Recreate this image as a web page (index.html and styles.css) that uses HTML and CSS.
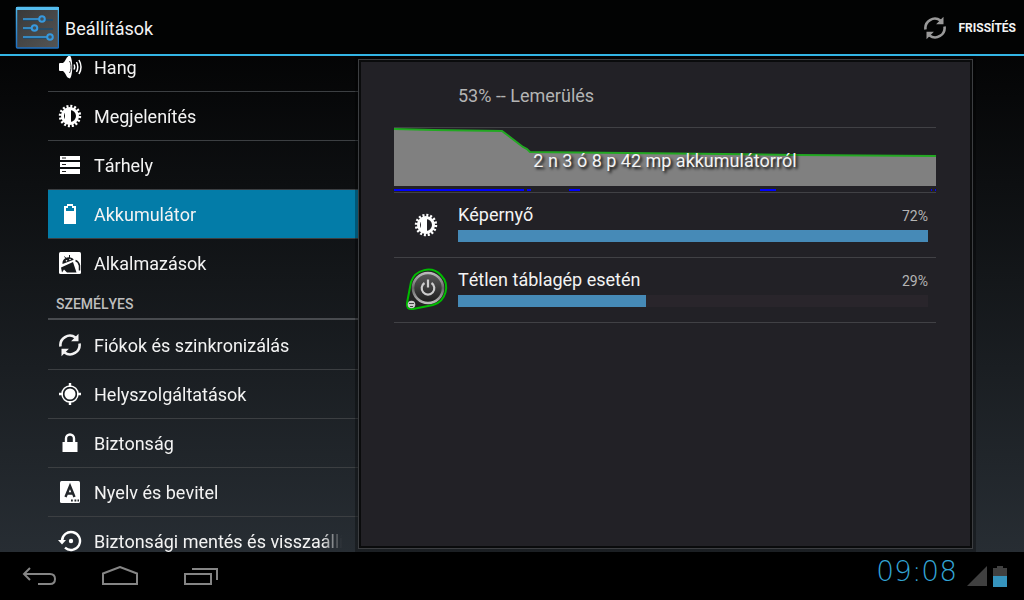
FILE: index.html
```html
<!DOCTYPE html>
<html lang="hu">
<head>
    <meta charset="UTF-8">
    <meta name="viewport" content="width=device-width, initial-scale=1.0">
    <title>Beállítások</title>
    <link rel="stylesheet" href="styles.css">
</head>
<body>
    <svg class="symbols" aria-hidden="true">
        <symbol id="brightness" viewBox="0 0 24 24">
            <circle cx="12" cy="12" r="9.700" fill="none" stroke="#fff" stroke-width="3" stroke-dasharray="2 1.809"/>
            <circle cx="12" cy="12" r="7.500" fill="none" stroke="#fff" stroke-width="3"/>
            <path d="M13 5.500H7v13h6z" fill="#fff"/>
        </symbol>
        <symbol id="sync" viewBox="0 0 24 24">
            <path d="M2.500 13.500A9.500 9.500 0 0 1 17.500 4.500M21.500 10.500A9.500 9.500 0 0 1 6.500 19.500" fill="none" stroke="currentColor" stroke-width="2.600"/>
            <path d="M20.500 .8v7.400h-7.400zM3.500 23.200v-7.400h7.400z" fill="currentColor"/>
        </symbol>
    </svg>
    <header class="header">
        <svg class="logo" viewBox="0 0 44 44">
            <defs>
                <linearGradient id="logoFill" x1="0" y1="0" x2="1" y2="1">
                    <stop offset="0" stop-color="#383838"/>
                    <stop offset="1" stop-color="#555"/>
                </linearGradient>
                <linearGradient id="logoEdge" x1="0" y1="0" x2="0" y2="1">
                    <stop offset="0" stop-color="#4ab4ea"/>
                    <stop offset="1" stop-color="#1d6fc0"/>
                </linearGradient>
            </defs>
            <rect x="1.500" y="1.500" width="42" height="40.500" rx="1" fill="url(#logoFill)" stroke="url(#logoEdge)" stroke-width="1.500"/>
            <path d="M1 1h43v3H1z" fill="#55bdee"/>
            <path d="M8 14h30M8 23h30M8 32h30" stroke="#1c4c70" stroke-width="1.500"/>
            <path d="M8 13h17M8 22h10M8 31h24" stroke="#379fe4" stroke-width="1.500"/>
            <g fill="#42515b" stroke="#3699df" stroke-width="2">
                <circle cx="27" cy="13" r="2.800"/>
                <circle cx="19.500" cy="22" r="2.800"/>
                <circle cx="35" cy="31" r="2.800"/>
            </g>
        </svg>
        <h1>Beállítások</h1>
        <button class="refresh" type="button">
            <svg class="icon" viewBox="0 0 24 24"><use href="#sync"/></svg>
            <span>Frissítés</span>
        </button>
    </header>
    <main class="content">
        <nav class="sidebar">
            <ul class="list">
                <li><a href="#">
                    <svg class="icon" viewBox="0 0 24 24">
                        <path d="M1 9q0-1 1-1h3V16H2q-1 0-1-1zM5 8C8 6 8 1 12 .5c3 3 3 20 0 23C8 23 8 18 5 16z" fill="#fff"/>
                        <path d="M11.500 6c2 3 2 9 0 12" fill="none" stroke="#333" stroke-width="1"/>
                        <path d="M16 9.500q1.300 2.500 0 5M18.500 7q2.500 5 0 10M21 5q4 7 0 14" fill="none" stroke="#fff" stroke-width="1.500"/>
                    </svg>
                    <span>Hang</span>
                </a></li>
                <li><a href="#">
                    <svg class="icon" viewBox="0 0 24 24"><use href="#brightness"/></svg>
                    <span>Megjelenítés</span>
                </a></li>
                <li><a href="#">
                    <svg class="icon" viewBox="0 0 24 24">
                        <path d="M2 3h20v4H2zM2 9h20v5H2zM2 16h20v5H2z" fill="#fff"/>
                        <path d="M4 5h4M4 11.500h4M4 18.500h4" stroke="#222" stroke-width="1.200"/>
                    </svg>
                    <span>Tárhely</span>
                </a></li>
                <li class="active"><a href="#">
                    <svg class="icon" viewBox="0 0 24 24">
                        <path d="M6 22V4h3V2h6v2h3v18z" fill="#fff"/>
                        <path d="M8 9V6h2V4h4v2h2v3z" fill="#037ca8"/>
                    </svg>
                    <span>Akkumulátor</span>
                </a></li>
                <li><a href="#">
                    <svg class="icon" viewBox="0 0 24 24">
                        <rect x="1" y="1" width="22" height="22" rx="1.500" fill="#fff"/>
                        <path d="M4.500 13C4 9 7 6.500 10.500 6.300c3 0 4.500 1.200 5.200 2.500z" fill="#16191c"/>
                        <path d="M6.500 5.500l1.500 2M11.500 4v3" stroke="#16191c" stroke-width="1"/>
                        <path d="M3 16.500L15 11l3.500 10.500H9L6 18.500l-2 3z" fill="#16191c"/>
                        <path d="M17.500 9.500q3 1 4 5v5" fill="none" stroke="#16191c" stroke-width="1.500"/>
                        <circle cx="8.500" cy="9.800" r=".8" fill="#fff"/>
                        <circle cx="12" cy="8.500" r=".8" fill="#fff"/>
                    </svg>
                    <span>Alkalmazások</span>
                </a></li>
            </ul>
            <h2>Személyes</h2>
            <ul class="list">
                <li><a href="#">
                    <svg class="icon" viewBox="0 0 24 24"><use href="#sync"/></svg>
                    <span>Fiókok és szinkronizálás</span>
                </a></li>
                <li><a href="#">
                    <svg class="icon" viewBox="0 0 24 24">
                        <path d="M12 1v4M12 19v4M1 12h4M19 12h4" stroke="#fff" stroke-width="2.400"/>
                        <circle cx="12" cy="12" r="8" fill="none" stroke="#fff" stroke-width="1.500"/>
                        <circle cx="12" cy="12" r="5.500" fill="#fff"/>
                    </svg>
                    <span>Helyszolgáltatások</span>
                </a></li>
                <li><a href="#">
                    <svg class="icon" viewBox="0 0 24 24">
                        <path d="M4.500 11h15v10h-15z" fill="#fff"/>
                        <path d="M8 11.500V7.500a4 4 0 0 1 8 0v4" fill="none" stroke="#fff" stroke-width="2.400"/>
                    </svg>
                    <span>Biztonság</span>
                </a></li>
                <li><a href="#">
                    <svg class="icon" viewBox="0 0 24 24">
                        <rect x="2" y="1" width="20" height="22" rx="1.500" fill="#fff"/>
                        <path d="M7.500 17l4.500-11 4.500 11M9 13.500h6" fill="none" stroke="#23272b" stroke-width="2.400"/>
                        <path d="M13 20.500h1.800M16.500 20.500h1.800M19.500 20.500h1.500" stroke="#23272b" stroke-width="2"/>
                    </svg>
                    <span>Nyelv és bevitel</span>
                </a></li>
                <li><a href="#">
                    <svg class="icon" viewBox="0 0 24 24">
                        <path d="M4 12a9 9 0 1 1 3 6.700" fill="none" stroke="#fff" stroke-width="2.400"/>
                        <path d="M0 11h8l-4 4.500z" fill="#fff"/>
                        <circle cx="13" cy="12" r="2.200" fill="#fff"/>
                    </svg>
                    <span>Biztonsági mentés és visszaállítás</span>
                </a></li>
            </ul>
        </nav>
        <section class="panel">
            <div class="details">
                <p class="status">53% -- Lemerülés</p>
                <div class="chart">
                    <svg viewBox="0 0 542 64" preserveAspectRatio="none">
                        <path d="M0 1L40 2L108 3L129 19L133 21L136 24L330 26L400 27L542 28V58H0z" fill="#808080"/>
                        <path d="M0 1L40 2L108 3L129 19L133 21L136 24L330 26L400 27L542 28" fill="none" stroke="#22a822" stroke-width="2"/>
                        <path d="M0 62h130M133 62h4M175 62h11M366 62h16M537 62h1M541 62h1" stroke="#00f" stroke-width="2"/>
                    </svg>
                    <span>2 n 3 ó 8 p 42 mp akkumulátorról</span>
                </div>
                <div class="usage">
                    <svg class="icon" viewBox="0 0 24 24"><use href="#brightness"/></svg>
                    <div class="info">
                        <div class="label"><span>Képernyő</span><small>72%</small></div>
                        <div class="bar"><div class="fill" style="width: 100%"></div></div>
                    </div>
                </div>
                <div class="usage">
                    <svg class="power" viewBox="0 0 48 48">
                        <defs>
                            <linearGradient id="rim" x1="0" y1="0" x2="0" y2="1">
                                <stop offset="0" stop-color="#bbb"/>
                                <stop offset=".5" stop-color="#666"/>
                                <stop offset="1" stop-color="#bbb"/>
                            </linearGradient>
                            <linearGradient id="knob" x1="0" y1="0" x2="0" y2="1">
                                <stop offset="0" stop-color="#5a5a5a"/>
                                <stop offset="1" stop-color="#1c1c1c"/>
                            </linearGradient>
                        </defs>
                        <path d="M9 16A18 18 0 1 1 31 39L11 43Q4 44 5 37z" fill="#222" stroke="#0b0" stroke-width="2"/>
                        <circle cx="26" cy="22" r="15" fill="url(#knob)" stroke="url(#rim)" stroke-width="2.600"/>
                        <path d="M22.500 17a6.300 6.300 0 1 0 7 0M26 13.500v8" fill="none" stroke="#ccc" stroke-width="2.200"/>
                        <circle cx="9.500" cy="38.500" r="3.800" fill="#ccc"/>
                        <path d="M7 37.500h5M8 40.500h3" stroke="#444" stroke-width="1.200"/>
                    </svg>
                    <div class="info">
                        <div class="label"><span>Tétlen táblagép esetén</span><small>29%</small></div>
                        <div class="bar"><div class="fill" style="width: 40%"></div></div>
                    </div>
                </div>
            </div>
        </section>
    </main>
    <footer class="navbar">
        <button type="button" aria-label="Vissza">
            <svg viewBox="0 0 40 24"><path d="M10 2L4 8l6 6M4 8h26q5 0 5 5t-5 5H18" fill="none" stroke="#858585" stroke-width="2"/></svg>
        </button>
        <button type="button" aria-label="Kezdőképernyő">
            <svg viewBox="0 0 40 24"><path d="M3 18V7.500L20 1l17 6.500V18z" fill="none" stroke="#858585" stroke-width="2"/></svg>
        </button>
        <button type="button" aria-label="Legutóbbi">
            <svg viewBox="0 0 40 24"><path d="M5 8h26v10H5zM12 3h25v11" fill="none" stroke="#858585" stroke-width="2"/></svg>
        </button>
        <div class="system">
            <time>09:08</time>
            <svg class="signal" viewBox="0 0 20 20"><path d="M0 20L20 0v20z" fill="#404040"/></svg>
            <svg class="battery" viewBox="0 0 14 21">
                <path d="M0 10V2h4V0h6v2h4v8z" fill="#404040"/>
                <path d="M0 10h14v11H0z" fill="#3593bd"/>
            </svg>
        </div>
    </footer>
</body>
</html>
```
FILE: styles.css
```css
* {
    margin: 0px;
    padding: 0px;
    box-sizing: border-box;
}
body {
    height: 100vh;
    display: flex;
    flex-direction: column;
    background: linear-gradient(#000, #272d33 552px);
    color: #f3f3f3;
    font-family: Roboto, "Liberation Sans", sans-serif;
    font-size: 18px;
    font-kerning: none;
    overflow: hidden;
}
a {
    color: inherit;
    text-decoration: none;
}
button {
    background: none;
    border: none;
    color: inherit;
    font-family: inherit;
    cursor: pointer;
}
.symbols {
    display: none;
}
.icon {
    width: 24px;
    height: 24px;
    flex-shrink: 0;
}
.header {
    flex-shrink: 0;
    height: 56px;
    display: flex;
    align-items: center;
    padding: 2px 8px 0px 15px;
    background-color: #020303;
    border-bottom: 2px solid #33b5e5;
}
.logo {
    width: 44px;
    height: 44px;
}
h1 {
    margin-left: 6px;
    font-size: 18px;
    font-weight: normal;
}
.refresh {
    display: flex;
    align-items: center;
    gap: 12px;
    margin-left: auto;
    font-size: 12px;
    font-weight: bold;
    text-transform: uppercase;
}
.refresh .icon {
    color: #999;
}
.content {
    flex: 1;
    min-height: 0px;
    display: flex;
    padding: 0px 48px;
}
.sidebar {
    width: 310px;
    flex-shrink: 0;
    overflow: hidden;
}
.list {
    list-style: none;
    margin-top: 1px;
}
/* the list is scrolled a little */
.list:first-child {
    margin-top: -13px;
}
.list li {
    height: 49px;
    border-bottom: 1px solid #3c3f42;
}
.list:first-child li:last-child {
    border-bottom-color: transparent;
}
.list a {
    height: 48px;
    display: flex;
    align-items: center;
    gap: 12px;
    padding: 0px 16px 0px 10px;
}
.list span {
    flex: 1;
    padding-top: 2px;
    overflow: hidden;
    white-space: nowrap;
    line-height: 24px;
    mask-image: linear-gradient(to left, transparent, #000 20px);
}
.list .active {
    background-color: #037ca8;
}
h2 {
    height: 32px;
    padding-left: 8px;
    border-bottom: 2px solid #484b4f;
    color: #bebebe;
    font-size: 14px;
    font-weight: 500;
    line-height: 32px;
    text-transform: uppercase;
}
.panel {
    flex: 1;
    position: relative;
    margin: 3px 3px 3px 0px;
    padding: 2px;
    border: 1px solid #3c3e41;
    background-color: #0a0b0c;
    box-shadow: 0px 0px 0px 3px rgba(0, 0, 0, 0.3);
}
.details {
    height: 100%;
    padding: 0px 34px 0px 33px;
    background-color: #222126;
}
.status {
    height: 66px;
    padding-left: 64px;
    border-bottom: 1px solid #414145;
    color: #b4b4b4;
    line-height: 68px;
}
.chart {
    height: 65px;
    display: grid;
    align-items: center;
    justify-items: center;
    border-bottom: 1px solid #414145;
}
.chart svg,
.chart span {
    grid-area: 1 / 1;
}
.chart svg {
    width: 100%;
    height: 64px;
}
.chart span {
    text-shadow: 2px 2px 3px #000;
}
.usage {
    height: 65px;
    display: flex;
    align-items: center;
    padding-right: 8px;
    border-bottom: 1px solid #414145;
}
.usage .icon {
    margin: 0px 20px;
}
.power {
    width: 48px;
    height: 48px;
    margin: 0px 8px;
}
.info {
    flex: 1;
    padding-bottom: 4px;
}
.label {
    display: flex;
    justify-content: space-between;
    align-items: center;
    margin-bottom: 4px;
    line-height: 22px;
}
.label small {
    padding-top: 2px;
    color: #b4b4b4;
    font-size: 14px;
    line-height: 20px;
}
.bar {
    height: 12px;
    background-color: #29252b;
}
.fill {
    height: 100%;
    background-color: #468ab7;
}
.navbar {
    flex-shrink: 0;
    height: 48px;
    display: flex;
    align-items: center;
    background-color: #000;
}
.navbar button {
    width: 80px;
    height: 48px;
}
.navbar button svg {
    width: 40px;
    height: 24px;
    margin-top: 6px;
}
.system {
    display: flex;
    align-items: center;
    margin-left: auto;
    padding-right: 17px;
}
time {
    margin-right: 10px;
    margin-bottom: 8px;
    color: #33a5d6;
    font-family: "DejaVu Sans", sans-serif;
    font-size: 28px;
    font-weight: 200;
    line-height: 32px;
}
.signal {
    width: 20px;
    height: 20px;
    margin-right: 6px;
}
.battery {
    width: 14px;
    height: 21px;
}
```
